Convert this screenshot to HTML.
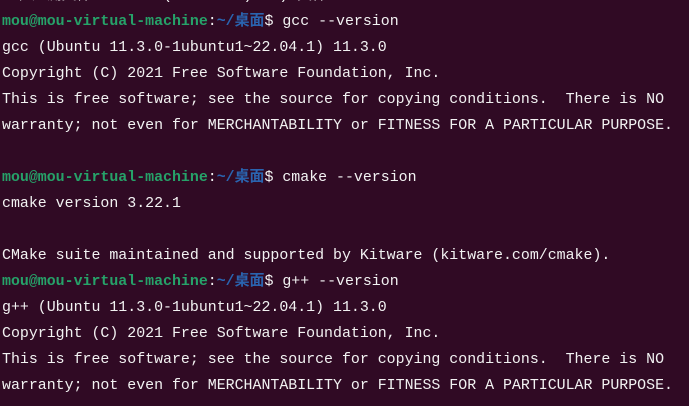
<!DOCTYPE html>
<html><head><meta charset="utf-8"><style>
html,body{margin:0;padding:0;background:#300a24;width:689px;height:406px;overflow:hidden}
pre{margin:0;position:absolute;left:2px;top:-17px;font-family:"Liberation Mono","Noto Sans CJK SC",monospace;font-size:14.7px;line-height:26px;color:#f2f2f2;transform:scaleX(1.015);transform-origin:0 0}
.g{color:#26a269;font-weight:bold}.b{color:#2a64b0;font-weight:bold}
</style></head><body>
<pre>上程建测文件        (        )   ) 文件
<span class="g">mou@mou-virtual-machine</span>:<span class="b">~/桌面</span>$ gcc --version
gcc (Ubuntu 11.3.0-1ubuntu1~22.04.1) 11.3.0
Copyright (C) 2021 Free Software Foundation, Inc.
This is free software; see the source for copying conditions.  There is NO
warranty; not even for MERCHANTABILITY or FITNESS FOR A PARTICULAR PURPOSE.

<span class="g">mou@mou-virtual-machine</span>:<span class="b">~/桌面</span>$ cmake --version
cmake version 3.22.1

CMake suite maintained and supported by Kitware (kitware.com/cmake).
<span class="g">mou@mou-virtual-machine</span>:<span class="b">~/桌面</span>$ g++ --version
g++ (Ubuntu 11.3.0-1ubuntu1~22.04.1) 11.3.0
Copyright (C) 2021 Free Software Foundation, Inc.
This is free software; see the source for copying conditions.  There is NO
warranty; not even for MERCHANTABILITY or FITNESS FOR A PARTICULAR PURPOSE.
</pre>
</body></html>
